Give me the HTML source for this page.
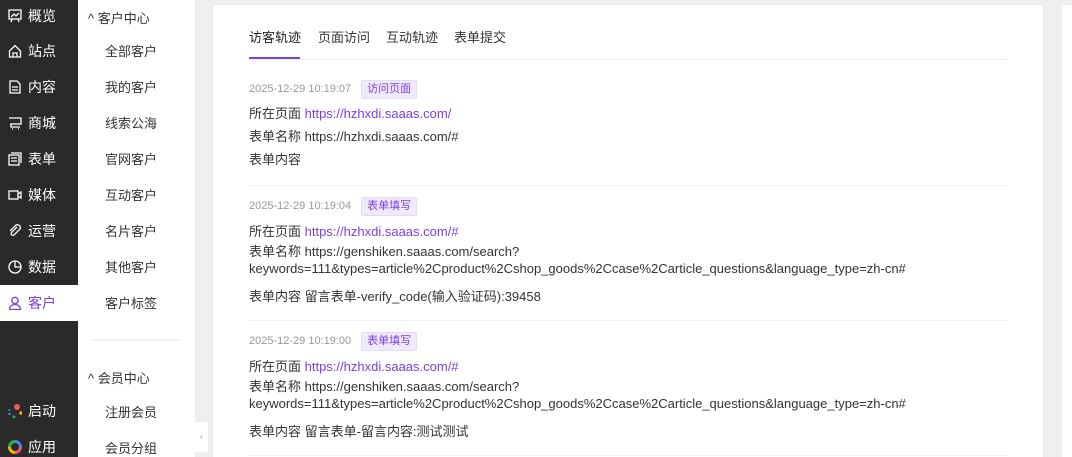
<!DOCTYPE html>
<html><head><meta charset="utf-8"><style>
*{margin:0;padding:0;box-sizing:border-box}
html,body{width:1072px;height:457px;overflow:hidden}
body{background:#efefef;font-family:"Liberation Sans","Noto Sans CJK SC",sans-serif;position:relative}
.side{position:absolute;left:0;top:0;width:78px;height:457px;background:#2a2a2a}
.side .it{position:absolute;left:0;width:78px;height:36px;color:#fff;font-size:14px;line-height:36px;padding-left:28px}
.side .ic{position:absolute;left:8px;top:11px;width:14px;height:14px}
.side .act{background:#fff;color:#7b3fe4}
.sub{position:absolute;left:78px;top:0;width:117px;height:457px;background:#fff}
.sub .h{position:absolute;left:10px;font-size:13px;color:#333}
.sub .s{position:absolute;left:27px;font-size:13px;color:#333}
.card{position:absolute;left:213px;top:5px;width:830px;height:460px;background:#fff;border-radius:4px}
.card2{position:absolute;left:1062px;top:5px;width:20px;height:460px;background:#fff;border-radius:4px}
.tab{position:absolute;top:22px;font-size:13px;color:#333}
.line{position:absolute;left:36px;width:758px;height:1px;background:#f0f0f0}
.t{position:absolute;left:36px;font-size:13px;color:#333;white-space:nowrap}
.d{color:#999;font-size:11px}
.tag{display:inline-block;background:#f1eafd;color:#7b3fe4;font-size:11px;padding:0 5px;line-height:17px;border-radius:2px;margin-left:10px;border:1px solid #e6dafa}
a{color:#7b3fe4;text-decoration:none}
</style></head><body>
<div class="side">
<div class="it" style="top:-2px"><svg class="ic" viewBox="0 0 14 14" fill="none" stroke="#fff" stroke-width="1.3"><rect x="1" y="1" width="12" height="9"/><path d="M3 8l3-3 2 2 3-3M4 10l-1 3M10 10l1 3"/></svg>概览</div>
<div class="it" style="top:33px"><svg class="ic" viewBox="0 0 14 14" fill="none" stroke="#fff" stroke-width="1.3"><path d="M1.5 7L7 1.5 12.5 7V13H1.5Z M5 13V9h4v4"/></svg>站点</div>
<div class="it" style="top:69px"><svg class="ic" viewBox="0 0 14 14" fill="none" stroke="#fff" stroke-width="1.3"><path d="M2 1h7l3 3v9H2zM4 7h6M4 10h6"/></svg>内容</div>
<div class="it" style="top:105px"><svg class="ic" viewBox="0 0 14 14" fill="none" stroke="#fff" stroke-width="1.3"><path d="M1 2h12v6H2M3 8v3h9M4 13h1M10 13h1"/></svg>商城</div>
<div class="it" style="top:141px"><svg class="ic" viewBox="0 0 14 14" fill="none" stroke="#fff" stroke-width="1.3"><rect x="1" y="3" width="10" height="10"/><path d="M3 1h10v10M3 6h6M3 9h6"/></svg>表单</div>
<div class="it" style="top:177px"><svg class="ic" viewBox="0 0 14 14" fill="none" stroke="#fff" stroke-width="1.3"><rect x="1" y="3" width="9" height="8"/><path d="M10 6l3-2v6l-3-2"/></svg>媒体</div>
<div class="it" style="top:213px"><svg class="ic" viewBox="0 0 14 14" fill="none" stroke="#fff" stroke-width="1.3"><path d="M9 3L3.5 8.5a1.8 1.8 0 002.5 2.5L12 5a3 3 0 00-4-4L2 7"/></svg>运营</div>
<div class="it" style="top:249px"><svg class="ic" viewBox="0 0 14 14" fill="none" stroke="#fff" stroke-width="1.3"><circle cx="7" cy="7" r="6"/><path d="M7 1v6h6"/></svg>数据</div>
<div class="it act" style="top:285px"><svg class="ic" viewBox="0 0 14 14" fill="none" stroke="#7b3fe4" stroke-width="1.3"><circle cx="7" cy="4.5" r="3.2"/><path d="M1.5 13.5c0-3 2.5-5 5.5-5s5.5 2 5.5 5z"/></svg>客户</div>
<div class="it" style="top:393px"><svg class="ic" viewBox="0 0 14 14"><circle cx="9" cy="3" r="3" fill="#f05a5a"/><circle cx="13" cy="9" r="1.8" fill="#f5b800"/><circle cx="6" cy="13" r="1.5" fill="#2bb34a"/><circle cx="1.5" cy="10" r="1.2" fill="#3d8af7"/><circle cx="1.5" cy="6" r="1" fill="#3d8af7"/></svg>启动</div>
<div class="it" style="top:429px"><svg class="ic" viewBox="0 0 14 14"><circle cx="7" cy="7" r="5.5" fill="none" stroke="#f05a5a" stroke-width="3" stroke-dasharray="8.6 100"/><circle cx="7" cy="7" r="5.5" fill="none" stroke="#f5b800" stroke-width="3" stroke-dasharray="0 8.6 8.6 100"/><circle cx="7" cy="7" r="5.5" fill="none" stroke="#2bb34a" stroke-width="3" stroke-dasharray="0 17.2 8.6 100"/><circle cx="7" cy="7" r="5.5" fill="none" stroke="#3d8af7" stroke-width="3" stroke-dasharray="0 25.8 8.6 100"/></svg>应用</div>
</div>
<div class="sub">
<div class="h" style="top:8px">^ 客户中心</div>
<div class="s" style="top:41px">全部客户</div>
<div class="s" style="top:77px">我的客户</div>
<div class="s" style="top:113px">线索公海</div>
<div class="s" style="top:149px">官网客户</div>
<div class="s" style="top:185px">互动客户</div>
<div class="s" style="top:221px">名片客户</div>
<div class="s" style="top:257px">其他客户</div>
<div class="s" style="top:293px">客户标签</div>
<div style="position:absolute;left:14px;top:339px;width:90px;height:2px;background:#f2f2f7"></div>
<div class="h" style="top:368px">^ 会员中心</div>
<div class="s" style="top:402px">注册会员</div>
<div class="s" style="top:438px">会员分组</div>
</div>
<div style="position:absolute;left:195px;top:422px;width:13px;height:30px;background:#fff;color:#bbb;font-size:11px;line-height:30px;text-align:center">‹</div>
<div class="card">
<div class="tab" style="left:36px;color:#222">访客轨迹</div>
<div class="tab" style="left:105px">页面访问</div>
<div class="tab" style="left:173px">互动轨迹</div>
<div class="tab" style="left:241px">表单提交</div>
<div style="position:absolute;left:36px;top:52px;width:51px;height:2px;background:#7b3fe4"></div>
<div class="line" style="top:54px"></div>
<div class="t" style="top:75px"><span class="d">2025-12-29 10:19:07</span><span class="tag">访问页面</span></div>
<div class="t" style="top:98px">所在页面 <a>https://hzhxdi.saaas.com/</a></div>
<div class="t" style="top:121px">表单名称 https://hzhxdi.saaas.com/#</div>
<div class="t" style="top:144px">表单内容</div>
<div class="line" style="top:180px"></div>
<div class="t" style="top:192px"><span class="d">2025-12-29 10:19:04</span><span class="tag">表单填写</span></div>
<div class="t" style="top:216px">所在页面 <a>https://hzhxdi.saaas.com/#</a></div>
<div class="t" style="top:236px">表单名称 https://genshiken.saaas.com/search?</div>
<div class="t" style="top:256px">keywords=111&amp;types=article%2Cproduct%2Cshop_goods%2Ccase%2Carticle_questions&amp;language_type=zh-cn#</div>
<div class="t" style="top:281px">表单内容 留言表单-verify_code(输入验证码):39458</div>
<div class="line" style="top:315px"></div>
<div class="t" style="top:327px"><span class="d">2025-12-29 10:19:00</span><span class="tag">表单填写</span></div>
<div class="t" style="top:351px">所在页面 <a>https://hzhxdi.saaas.com/#</a></div>
<div class="t" style="top:371px">表单名称 https://genshiken.saaas.com/search?</div>
<div class="t" style="top:391px">keywords=111&amp;types=article%2Cproduct%2Cshop_goods%2Ccase%2Carticle_questions&amp;language_type=zh-cn#</div>
<div class="t" style="top:416px">表单内容 留言表单-留言内容:测试测试</div>
<div class="line" style="top:450px"></div>
</div>
<div class="card2"></div>
</body></html>
